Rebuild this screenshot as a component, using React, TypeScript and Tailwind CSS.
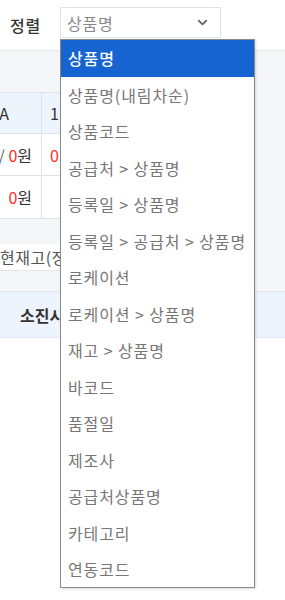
import React from 'react';
import { ChevronDown } from 'lucide-react';

const options = [
  '상품명',
  '상품명(내림차순)',
  '상품코드',
  '공급처 > 상품명',
  '등록일 > 상품명',
  '등록일 > 공급처 > 상품명',
  '로케이션',
  '로케이션 > 상품명',
  '재고 > 상품명',
  '바코드',
  '품절일',
  '제조사',
  '공급처상품명',
  '카테고리',
  '연동코드',
];

export default function App() {
  return (
    <div
      className="relative w-[285px] h-[600px] overflow-hidden bg-white"
      style={{ fontFamily: '"Noto Sans CJK KR", "Noto Sans", sans-serif' }}
    >
      {/* 정렬 헤더 */}
      <div className="h-[51px] flex items-center border-b border-[#e6e9ee] bg-white">
        <span className="ml-[10px] w-[50px] text-[16px] font-medium text-[#333] tracking-[0.8px]">정렬</span>
        <div className="w-[161px] h-[31px] -mt-[5px] border border-[#dfe4ea] flex items-center justify-between pl-[6px] pr-[10px]">
          <span className="text-[16px] text-[#888] tracking-[0.8px]">상품명</span>
          <ChevronDown size={15} strokeWidth={3} className="text-[#666]" />
        </div>
      </div>

      {/* 회색 영역 */}
      <div className="bg-[#f5f6f8] pt-[41px] pb-[20px]">
        <div className="w-[230px] bg-white border-t border-[#dde3ea]">
          <div className="flex h-[41px] bg-[#eef4fc] border-b border-[#dde3ea] text-[16px] text-[#333]">
            <div className="w-[42px] border-r border-[#dde3ea] flex items-center justify-end pr-[32px] whitespace-nowrap overflow-hidden">A</div>
            <div className="flex-1 flex items-center pl-[8px]">1</div>
          </div>
          <div className="flex h-[42px] border-b border-[#dde3ea] text-[16px]">
            <div className="w-[42px] border-r border-[#dde3ea] flex items-center justify-end pr-[9px] whitespace-nowrap overflow-hidden">
              <span className="text-[#666]">/&nbsp;</span>
              <span className="text-[#ff2a2a]">0</span>
              <span className="text-[#333]">원</span>
            </div>
            <div className="flex-1 flex items-center pl-[8px] text-[#ff2a2a]">0</div>
          </div>
          <div className="flex h-[43px] border-b border-[#dde3ea] text-[16px]">
            <div className="w-[42px] border-r border-[#dde3ea] flex items-center justify-end pr-[9px] whitespace-nowrap overflow-hidden">
              <span className="text-[#ff2a2a]">0</span>
              <span className="text-[#333]">원</span>
            </div>
            <div className="flex-1" />
          </div>
        </div>

        <div className="mt-[25px] w-[230px] h-[27px] bg-white flex items-center border-b border-[#e3e6ea]">
          <span className="w-[60px] overflow-hidden whitespace-nowrap text-[16px] text-[#555] tracking-[0.5px]">현재고(정상)</span>
        </div>
      </div>

      {/* 소진시 행 */}
      <div className="h-[47px] bg-[#eef4fd] border-t border-[#dfe7f1] border-b border-[#e3e9f2] flex items-center pl-[20px]">
        <span className="w-[40px] overflow-hidden text-[16px] font-bold text-[#333] whitespace-nowrap">소진시점</span>
      </div>

      {/* 드롭다운 목록 */}
      <div className="absolute left-[60px] top-[39px] w-[195px] h-[549px] bg-white border border-[#8a8a8a] shadow-[1px_1px_2px_rgba(0,0,0,0.15)]">
        {options.map((o, i) => (
          <div
            key={o}
            className={
              i === 0
                ? 'h-[36.5px] flex items-center pl-[7px] text-[16px] tracking-[0.9px] bg-[#1664d2] text-white font-medium'
                : 'h-[36.5px] flex items-center pl-[7px] text-[16px] tracking-[0.9px] text-[#767676] whitespace-nowrap'
            }
          >
            {o}
          </div>
        ))}
      </div>
    </div>
  );
}
